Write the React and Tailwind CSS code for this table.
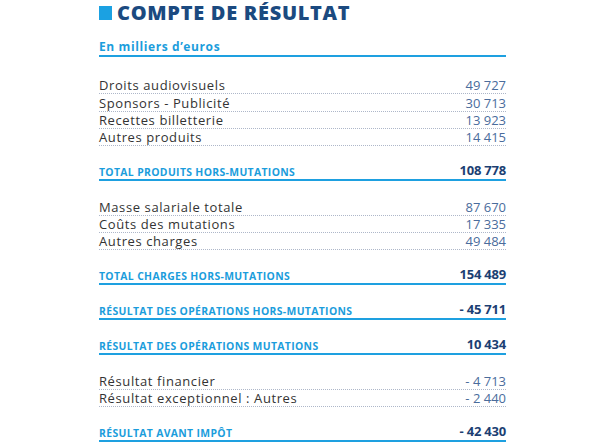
export default function App() {
  const font = { fontFamily: '"Open Sans", "Liberation Sans", sans-serif' };
  const Light = ({ label, value }) => (
    <div className="flex h-[17.33px] items-end justify-between border-b border-dotted border-[#aeb7c9]">
      <span className="text-[13px] leading-[15px] tracking-[0.6px] text-[#333333]">{label}</span>
      <span className="text-[13px] leading-[15px] text-[#4a6c9c]">{value}</span>
    </div>
  );
  const Total = ({ label, value }) => (
    <div className="flex h-[18px] items-end justify-between border-b-2 border-[#1ea0e0] pb-[1px]">
      <span className="text-[10.4px] font-bold leading-[12px] tracking-[0.35px] text-[#1b9ddc]">{label}</span>
      <span className="text-[13px] font-bold leading-[15px] tracking-[-0.2px] text-[#1c3f73]">{value}</span>
    </div>
  );
  return (
    <div className="h-[444px] w-[600px] bg-white" style={font}>
      <div className="ml-[99px] w-[407px]">
        <div className="flex h-[25px] items-center gap-[5px]">
          <div className="h-[14px] w-[13px] bg-[#1ba1e2]"></div>
          <span className="text-[20px] font-extrabold leading-[25px] tracking-[0.7px] text-[#1b4a80]">COMPTE DE RÉSULTAT</span>
        </div>
        <div className="mt-[14px] flex h-[18px] items-end border-b-2 border-[#1ea0e0] pb-[1px]">
          <span className="text-[12px] font-bold leading-[14px] tracking-[0.6px] text-[#1b9ddc]">En milliers d’euros</span>
        </div>
        <div className="mt-[20px]">
          <Light label="Droits audiovisuels" value="49 727" />
          <Light label="Sponsors - Publicité" value="30 713" />
          <Light label="Recettes billetterie" value="13 923" />
          <Light label="Autres produits" value="14 415" />
        </div>
        <div className="mt-[17px]">
          <Total label="TOTAL PRODUITS HORS-MUTATIONS" value="108 778" />
        </div>
        <div className="mt-[17px]">
          <Light label="Masse salariale totale" value="87 670" />
          <Light label="Coûts des mutations" value="17 335" />
          <Light label="Autres charges" value="49 484" />
        </div>
        <div className="mt-[17px]">
          <Total label="TOTAL CHARGES HORS-MUTATIONS" value="154 489" />
        </div>
        <div className="mt-[17px]">
          <Total label="RÉSULTAT DES OPÉRATIONS HORS-MUTATIONS" value="- 45 711" />
        </div>
        <div className="mt-[17px]">
          <Total label="RÉSULTAT DES OPÉRATIONS MUTATIONS" value="10 434" />
        </div>
        <div className="mt-[17px]">
          <Light label="Résultat financier" value="- 4 713" />
          <Light label="Résultat exceptionnel : Autres" value="- 2 440" />
        </div>
        <div className="mt-[17px]">
          <Total label="RÉSULTAT AVANT IMPÔT" value="- 42 430" />
        </div>
      </div>
    </div>
  );
}
